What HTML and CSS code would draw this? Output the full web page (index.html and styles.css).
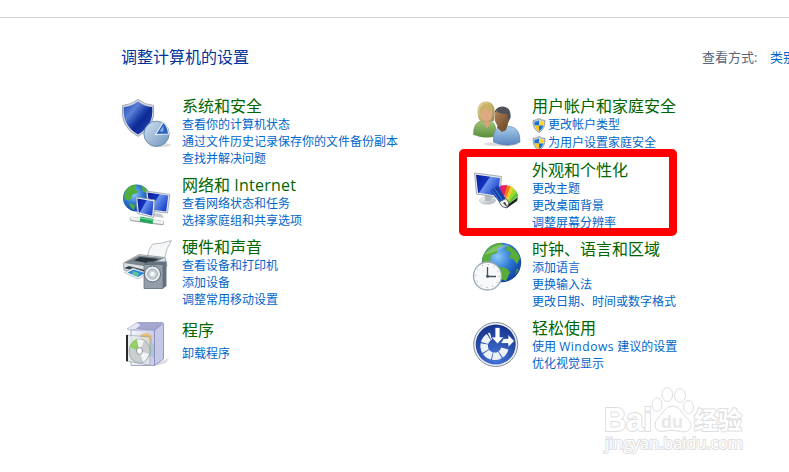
FILE: index.html
```html
<!DOCTYPE html>
<html lang="zh-CN">
<head>
    <meta charset="UTF-8">
    <title>控制面板</title>
    <link rel="stylesheet" href="styles.css">
</head>
<body>
<svg class="defs" aria-hidden="true">
    <defs>
        <linearGradient id="blue" x1="0" y1="0" x2="1" y2="1">
            <stop offset="0" stop-color="#1a3fae"/>
            <stop offset=".3" stop-color="#5b80d6"/>
            <stop offset=".5" stop-color="#1c3fa8"/>
            <stop offset=".6" stop-color="#0d2a94"/>
            <stop offset="1" stop-color="#2450c0"/>
        </linearGradient>
        <linearGradient id="screen" x1="0" y1="0" x2="1" y2=".6">
            <stop offset="0" stop-color="#0a1e96"/>
            <stop offset=".45" stop-color="#1434c0"/>
            <stop offset=".5" stop-color="#6d94ec"/>
            <stop offset="1" stop-color="#1c44cc"/>
        </linearGradient>
        <linearGradient id="steel" x1="0" y1="0" x2="1" y2="1">
            <stop offset="0" stop-color="#d3e2f0"/>
            <stop offset="1" stop-color="#6e93bd"/>
        </linearGradient>
        <linearGradient id="silver" x1="0" y1="0" x2="1" y2="1">
            <stop offset="0" stop-color="#ffffff"/>
            <stop offset="1" stop-color="#a9b0b8"/>
        </linearGradient>
        <linearGradient id="box" x1="0" y1="0" x2="1" y2="0">
            <stop offset="0" stop-color="#f4f5fc"/>
            <stop offset="1" stop-color="#c9cbe8"/>
        </linearGradient>
        <linearGradient id="green" x1="0" y1="0" x2="0" y2="1">
            <stop offset="0" stop-color="#a3c77b"/>
            <stop offset="1" stop-color="#5b8e3b"/>
        </linearGradient>
        <linearGradient id="shirt" x1="0" y1="0" x2="0" y2="1">
            <stop offset="0" stop-color="#a9cbed"/>
            <stop offset="1" stop-color="#5685bd"/>
        </linearGradient>
        <linearGradient id="hair" x1="0" y1="0" x2="1" y2="1">
            <stop offset="0" stop-color="#e6d79b"/>
            <stop offset="1" stop-color="#9c8746"/>
        </linearGradient>
        <linearGradient id="face" x1="0" y1="0" x2="1" y2="1">
            <stop offset="0" stop-color="#b58a62"/>
            <stop offset="1" stop-color="#6d4525"/>
        </linearGradient>
        <radialGradient id="sea" cx=".4" cy=".35" r=".7">
            <stop offset="0" stop-color="#8ccaf8"/>
            <stop offset=".5" stop-color="#2e79d6"/>
            <stop offset="1" stop-color="#0e3c98"/>
        </radialGradient>
        <radialGradient id="disc" cx=".5" cy=".85" r=".9">
            <stop offset="0" stop-color="#4577dc"/>
            <stop offset="1" stop-color="#122d83"/>
        </radialGradient>
        <symbol id="uac" viewBox="0 0 14 16">
            <path d="M7 .6Q9.800 2.600 13.300 2.600Q13.800 11.500 7 15.400Q.2 11.500 .7 2.600Q4.200 2.600 7 .6Z" fill="#d9dee4" stroke="#7e878f" stroke-width=".9"/>
            <path d="M7 2.300V8H2.200Q1.900 5.500 2.200 3.900Q5 3.700 7 2.300Z" fill="#1c73d4"/>
            <path d="M7 2.300V8H11.800Q12.100 5.500 11.800 3.900Q9 3.700 7 2.300Z" fill="#fdd52c"/>
            <path d="M7 8V13.800Q3 11.500 2.200 8Z" fill="#fbc81c"/>
            <path d="M7 8V13.800Q11 11.500 11.800 8Z" fill="#1c73d4"/>
        </symbol>
    </defs>
</svg>
<div id="home">
    <div class="top">
        <div class="title">调整计算机的设置</div>
        <div class="view"><span>查看方式:</span><a>类别</a></div>
    </div>
    <div class="content">
        <div class="column">
            <div class="item">
                <svg class="icon" viewBox="0 0 54 54">
                    <ellipse cx="40" cy="49" rx="11" ry="2" fill="#dddddd"/>
                    <path d="M18 3.500Q25 8.800 33.500 9.500Q36.500 31 18 40.500Q-.5 31 2.500 9.500Q11 8.800 18 3.500Z" fill="#d5dae2" stroke="#8d96a4" stroke-width=".8"/>
                    <path d="M18 5.500Q25 10.500 32.200 11Q34 29.500 18 38.500Q2 29.500 3.800 11Q11 10.500 18 5.500Z" fill="url(#blue)"/>
                    <circle cx="36.500" cy="37.800" r="12.600" fill="url(#steel)" stroke="#6486ad" stroke-width=".9"/>
                    <path d="M35.500 38.500L43.500 26Q48.300 31 48.500 38Z" fill="#2e63bb" stroke="#dce9f7" stroke-width="1.200"/>
                    <path d="M39.500 35.500L43.400 30V35.500Z" fill="#8db4e6"/>
                </svg>
                <div class="text">
                    <div class="name">系统和安全</div>
                    <a>查看你的计算机状态</a>
                    <a>通过文件历史记录保存你的文件备份副本</a>
                    <a>查找并解决问题</a>
                </div>
            </div>
            <div class="item">
                <svg class="icon" viewBox="0 0 54 54">
                    <circle cx="16.500" cy="23" r="13.500" fill="url(#sea)"/>
                    <path d="M6 15Q10 9 17 9.700L15 14L19 17L12 20L10 26L4.500 24Q3.500 19 6 15ZM21 10Q27 13 28.500 18L23 17ZM9 28L15 30L14 35Q10 33 9 28Z" fill="#4fae3c"/>
                    <path d="M34 38L42 39L44 43L31 41Z" fill="#c5c9ce"/>
                    <path d="M26 16L49.800 19.500L47.500 38L29 36Z" fill="#e8edf2" stroke="#87909c" stroke-width=".7"/>
                    <path d="M27.500 17.500L48.300 20.500L46.200 36.500L30 34.500Z" fill="url(#screen)"/>
                    <path d="M16 22L35 25L33.500 42.500L17.500 38.500Z" fill="#f4f6f9" stroke="#87909c" stroke-width=".7"/>
                    <path d="M17.300 23.500L33.500 26.300L32.200 40.700L18.700 37.200Z" fill="url(#screen)"/>
                    <path d="M12 44L42 48" stroke="#a4aaae" stroke-width="4.500" stroke-linecap="round"/>
                    <path d="M12 43.500L42 47.500" stroke="#f1f3f3" stroke-width="3.200" stroke-linecap="round"/>
                    <path d="M20 44L33 46.500" stroke="#22a85a" stroke-width="5"/>
                    <path d="M20 42.800L33 45.200" stroke="#7fe09f" stroke-width="1"/>
                </svg>
                <div class="text">
                    <div class="name">网络和 <span class="latin">Internet</span></div>
                    <a>查看网络状态和任务</a>
                    <a>选择家庭组和共享选项</a>
                </div>
            </div>
            <div class="item">
                <svg class="icon" viewBox="0 0 54 54">
                    <path d="M32.500 7Q41 7 51.500 3.500Q46 11 44.500 22L27 20Q29 12 32.500 7Z" fill="#f5f7f9" stroke="#9aa3ab" stroke-width=".7"/>
                    <path d="M3.500 26L19 17.500L45 20.500L47 29L25 37L4 33Z" fill="#dce1e6" stroke="#7c858e" stroke-width=".7"/>
                    <path d="M4 26L19 18.500L44 21L27 29.500Z" fill="#7b858f"/>
                    <path d="M14 23.500L20 20L39 22L29 26.500Z" fill="#2b333b"/>
                    <path d="M4 31L9 29L27 33.500L24 37Z" fill="#39434c"/>
                    <path d="M4.500 35.500L13 31L28 36L18 42Z" fill="#f4f8fb" stroke="#98a5af" stroke-width=".6"/>
                    <path d="M7.500 35.500L13.500 32.400L25 36L18 40Z" fill="#2c88d6"/>
                    <path d="M13 34L19 36L18 40L12 37.500Z" fill="#5bc2a7"/>
                    <path d="M24.500 27L28 24.500H46.500V49L43 51.500H24.500Z" fill="#657380"/>
                    <path d="M24 27.500H43V51.500H24Z" fill="#929ea9" stroke="#5c6873" stroke-width=".7"/>
                    <circle cx="32.500" cy="37" r="8" fill="#e9edf0" stroke="#5e6a74"/>
                    <circle cx="32.500" cy="37" r="5" fill="#c9d0d5" stroke="#8c969e" stroke-width=".7"/>
                    <circle cx="32.500" cy="37" r="2.200" fill="#f8fafb"/>
                </svg>
                <div class="text">
                    <div class="name">硬件和声音</div>
                    <a>查看设备和打印机</a>
                    <a>添加设备</a>
                    <a>调整常用移动设置</a>
                </div>
            </div>
            <div class="item last">
                <svg class="icon" viewBox="0 0 54 54">
                    <path d="M38 43L49 38L46 43L36 46Z" fill="#dddddd"/>
                    <path d="M11 8.500L18 2.500H43L35 10Z" fill="#a3a7cf" stroke="#8589b4" stroke-width=".6"/>
                    <path d="M7 9L17 2.500L21 5L13 11.500Z" fill="#e4e6f5" stroke="#9da0c8" stroke-width=".6"/>
                    <path d="M11 10H34.500V45.500H11Z" fill="url(#box)" stroke="#8f92bf" stroke-width=".8"/>
                    <path d="M34.500 10L43.500 3.500V39L34.500 45.500Z" fill="#c6c8e8" stroke="#8285b6" stroke-width=".8"/>
                    <path d="M20 15L27 13L32 16V31L26 36Z" fill="#e5bd75"/>
                    <path d="M27 20L34 24V38L27 34Z" fill="#a2c6cd" opacity=".8"/>
                    <path d="M6.500 15L30 17V45L6.500 41Z" fill="#e1e8e9" opacity=".75" stroke="#8c9699" stroke-width=".7"/>
                    <path d="M6 15H8V41.500L6 41Z" fill="#26292c"/>
                    <ellipse cx="19.500" cy="31" rx="10.500" ry="12" fill="#c9ced1" stroke="#8a9296" stroke-width=".6"/>
                    <path d="M19.500 31L9.500 27Q12 20 17 19.500Z" fill="#92d265"/>
                    <path d="M19.500 31L17 19.500Q21 18.500 24 21ZM19.500 31L29 34Q27 40 23 42Z" fill="#f3f4f4"/>
                    <ellipse cx="19.500" cy="31" rx="3" ry="3.500" fill="#ffffff" stroke="#8c9498"/>
                </svg>
                <div class="text">
                    <div class="name">程序</div>
                    <a>卸载程序</a>
                </div>
            </div>
        </div>
        <div class="column">
            <div class="item shield">
                <svg class="icon" viewBox="0 0 54 54">
                    <ellipse cx="31" cy="48" rx="17" ry="2" fill="#dddddd"/>
                    <path d="M3.500 38.500Q3.500 25.500 13 24.500H20Q27 27 26 40Q14 43 3.500 38.500Z" fill="url(#green)" stroke="#648e48" stroke-width=".6"/>
                    <path d="M12 23H20V27L17 33Z" fill="#d9a27a"/>
                    <path d="M8 21Q5.500 6 15.500 5.500Q26 5.500 24.500 19L24 25L13 26Q9 25 8 21Z" fill="url(#hair)"/>
                    <ellipse cx="16.500" cy="17.500" rx="6" ry="8" fill="#dca983"/>
                    <path d="M9.500 17Q10 8 17 8Q22 8 23 15Q16 15 13 12Q12 17 9.500 17Z" fill="#c9b265"/>
                    <path d="M23.500 46Q22 32 32 30.500H40Q50.500 32 50 46Q39 52.500 23.500 46Z" fill="url(#shirt)" stroke="#5c83b2" stroke-width=".6"/>
                    <path d="M28 28H38L36 34L32 36L27 31.500Z" fill="#7d5431"/>
                    <ellipse cx="32" cy="21.500" rx="7.500" ry="10" fill="url(#face)"/>
                    <path d="M24.500 18Q25 10.500 32.500 10.500Q41.500 11 40.500 22L38.500 25L37 18Q29 18 26.500 15Z" fill="#505158"/>
                </svg>
                <div class="text">
                    <div class="name">用户帐户和家庭安全</div>
                    <a><svg class="uac"><use href="#uac"/></svg>更改帐户类型</a>
                    <a><svg class="uac"><use href="#uac"/></svg>为用户设置家庭安全</a>
                </div>
            </div>
            <div class="item marked">
                <svg class="icon" viewBox="0 0 54 54">
                    <ellipse cx="17.500" cy="40.500" rx="8" ry="3.800" fill="url(#silver)" stroke="#b6bac0" stroke-width=".6"/>
                    <path d="M15 33L22 34L21 41H15Z" fill="#b5bac1"/>
                    <path d="M4.500 13L31.500 16.500L29.500 37.500L6.500 34Z" fill="#e8ebef" stroke="#9299a2" stroke-width=".8"/>
                    <path d="M6 14.700L30 18L28.200 35.700L8 32.700Z" fill="url(#screen)"/>
                    <path d="M34 47L48 37L47 41L37 48Z" fill="#222222"/>
                    <path d="M35 47L45.500 30L48.500 36Z" fill="#5cc43a"/>
                    <path d="M35 47L42.500 27L46.500 32Z" fill="#9fd92e"/>
                    <path d="M34 47L39.500 25.500L43.500 28Z" fill="#f3cf2d"/>
                    <path d="M33 47L36 25L40.500 26Z" fill="#f27722"/>
                    <path d="M32 46L31 25.500L37 25Z" fill="#e72457"/>
                    <path d="M32 46L26 28L32 25.500Z" fill="#bc25b0"/>
                    <path d="M20.500 30.500L28 26L38 43L32 46Z" fill="#143ea6"/>
                    <path d="M22 30L32 45M24.500 28.500L35 44" stroke="#4b85e0" stroke-width=".9"/>
                    <path d="M29 42L36 38.500L39 43L37 48L32 46.500Z" fill="#f2f2f2" stroke="#4b4d50" stroke-width=".8"/>
                    <path d="M33 43L35 42L38 48Z" fill="#333333"/>
                </svg>
                <div class="text">
                    <div class="name">外观和个性化</div>
                    <a>更改主题</a>
                    <a>更改桌面背景</a>
                    <a>调整屏幕分辨率</a>
                </div>
            </div>
            <div class="item">
                <svg class="icon" viewBox="0 0 54 54">
                    <circle cx="31.500" cy="23.500" r="19.700" fill="url(#sea)"/>
                    <path d="M14 15Q20 4 31 4L34 7L28 9L27 14L21 16L20 23L15 25L12 22Q12 18 14 15ZM37 6Q47 10 50 19L47 25L43 20L39 19L41 14L36 11ZM29 28L36 29L40 33L36 42L31 40L31 34L27 31ZM47 30L49 30L45 36Z" fill="#58ad37"/>
                    <path d="M14 16Q24 3 39 6Q30 12 14 16Z" fill="#ffffff" opacity=".25"/>
                    <circle cx="17.500" cy="37" r="14" fill="#f7f9fa" stroke="#9aa6b0" stroke-width="1.300"/>
                    <circle cx="17.500" cy="37" r="11.500" fill="none" stroke="#8b969e" stroke-width="1" stroke-dasharray="1 5.020"/>
                    <path d="M17.500 28V37.500H26" fill="none" stroke="#46535f" stroke-width="1.300"/>
                    <circle cx="17.500" cy="37.300" r="1.500" fill="#46535f"/>
                </svg>
                <div class="text">
                    <div class="name">时钟、语言和区域</div>
                    <a>添加语言</a>
                    <a>更换输入法</a>
                    <a>更改日期、时间或数字格式</a>
                </div>
            </div>
            <div class="item">
                <svg class="icon" viewBox="0 0 54 54">
                    <circle cx="25.700" cy="26.500" r="22" fill="#eef1f6" stroke="#82899a" stroke-width="1"/>
                    <circle cx="25.700" cy="26.500" r="20" fill="url(#disc)"/>
                    <path d="M34.800 30.500A10.500 10.500 0 1 1 21 18" fill="none" stroke="#edf1f8" stroke-width="7.500" stroke-dasharray="7.300 .9"/>
                    <path d="M25 9.500H30V19H34L27.500 26L21 19H25Z" fill="#ffffff" stroke="#2147a1" stroke-width=".8"/>
                    <path d="M33.500 20.500H38V16.500L44.500 23L38 29.500V25.500H30.500Z" fill="#ffffff" stroke="#2147a1" stroke-width=".8"/>
                </svg>
                <div class="text">
                    <div class="name">轻松使用</div>
                    <a>使用 <span class="latin">Windows</span> 建议的设置</a>
                    <a>优化视觉显示</a>
                </div>
            </div>
        </div>
    </div>
    <svg class="logo" viewBox="0 0 160 80">
        <text x="9" y="50.500" class="bai" textLength="48" lengthAdjust="spacingAndGlyphs">Bai</text>
        <ellipse cx="62" cy="24.500" rx="5" ry="6.800"/>
        <ellipse cx="72.300" cy="14.500" rx="5.300" ry="7"/>
        <ellipse cx="85" cy="15.500" rx="5.500" ry="6.800"/>
        <ellipse cx="93.500" cy="27" rx="5" ry="6.500"/>
        <path d="M68 32Q72 26 77 26Q83 26 86 31Q88 35 93 39Q99 45 94 50Q91 53 83 51Q77 49.500 71 51Q62 53 60 47Q59 42 63 38Q66 35 68 32Z"/>
        <text x="66" y="48" class="du" textLength="22" lengthAdjust="spacingAndGlyphs">du</text>
        <text x="99" y="49" class="exp">经验</text>
        <text x="10" y="69" class="site" textLength="138" lengthAdjust="spacingAndGlyphs">jingyan.baidu.com</text>
    </svg>
</div>
</body>
</html>
```
FILE: styles.css
```css
* {
    padding: 0;
    margin: 0;
    box-sizing: border-box;
}

body, html {
    width: 100%;
    height: 100%;
    overflow: hidden;
}

.defs {
    display: block;
    width: 0;
    height: 0;
}

#home {
    position: relative;
    width: 100%;
    height: 100%;
    padding-top: 17px;
    background: #FFFFFF;
    font-family: "Open Sans", "Noto Sans CJK SC", sans-serif;
    overflow: hidden;
}

.top {
    height: 79px;
    padding: 29px 0 0 121px;
    border-top: 1px solid #D5D5D5;
    display: flex;
    white-space: nowrap;
}

.title {
    width: 581px;
    flex-shrink: 0;
    font-size: 16px;
    line-height: 20px;
    color: #003399;
}

.view {
    display: flex;
    flex-shrink: 0;
    font-size: 13px;
    line-height: 20px;
    color: #5A6478;
}

.view span {
    width: 68px;
}

a {
    color: #0066CC;
    cursor: pointer;
}

a:hover {
    text-decoration: underline;
}

.content {
    display: grid;
    grid-template-columns: 350px 300px;
    padding-left: 120px;
}

.column {
    display: flex;
    flex-direction: column;
    gap: 8px;
}

.item {
    position: relative;
    display: flex;
    gap: 8px;
}

.icon {
    width: 54px;
    height: 54px;
    flex-shrink: 0;
}

.text {
    display: flex;
    flex-direction: column;
    align-items: flex-start;
    white-space: nowrap;
}

.text a {
    height: 17px;
    font-size: 12px;
    line-height: 17px;
}

.name {
    height: 20px;
    font-size: 16px;
    line-height: 20px;
    color: #006600;
}

.name .latin {
    letter-spacing: .25px;
}

a .latin {
    letter-spacing: .55px;
}

.last {
    margin-top: 4px;
}

.last .name {
    margin-bottom: 5px;
}

.shield a {
    display: flex;
    align-items: center;
    gap: 2px;
    height: 18px;
    line-height: 18px;
}

.uac {
    width: 14px;
    height: 15px;
}

/* 红色标注框 */
.marked::after {
    content: "";
    position: absolute;
    top: -11px;
    left: -11px;
    width: 218px;
    height: 87px;
    box-sizing: border-box;
    border: 8px solid #FF0000;
    border-radius: 5px;
}

/* 水印 */
.logo {
    position: absolute;
    left: 595px;
    top: 380px;
    width: 160px;
    height: 80px;
    fill: #FFFFFF;
    stroke: #DEDEDE;
    stroke-width: 1;
}

.logo text {
    paint-order: stroke;
    stroke-width: 2;
}

.bai {
    font: bold 33px "Liberation Sans", sans-serif;
}

.logo .du {
    font: bold 18px "Liberation Sans", sans-serif;
    fill: #E8E8E8;
    stroke: none;
}

.exp {
    font: bold 24px "Noto Sans CJK SC", sans-serif;
}

.site {
    font: 17px "Open Sans", sans-serif;
}
```
